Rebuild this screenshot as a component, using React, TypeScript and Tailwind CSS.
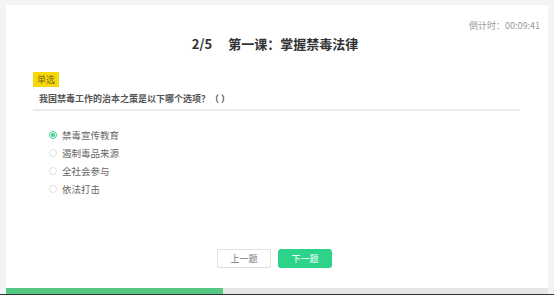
import React, { useState } from 'react';

const options = ['禁毒宣传教育', '遏制毒品来源', '全社会参与', '依法打击'];

export default function App() {
  const [selected, setSelected] = useState(0);

  return (
    <div
      className="w-[554px] h-[295px] bg-[#f3f4f5] flex flex-col overflow-hidden"
      style={{ fontFamily: '"Noto Sans CJK SC", "Noto Sans", sans-serif' }}
    >
      <div className="flex-1 flex flex-col pt-[5px] px-[6px]">
        <div className="flex-1 bg-white flex flex-col">
          {/* timer */}
          <div className="flex justify-end pr-[8px] pt-[15px] h-[28px]">
            <span className="text-[9px] leading-[12px] text-[#999]">倒计时：00:09:41</span>
          </div>

          {/* title */}
          <h1 className="text-center text-[13px] leading-[18px] font-bold text-[#333] mt-[2px] pr-[4px]">
            2/5<span className="inline-block w-[16px]" />第一课：掌握禁毒法律
          </h1>

          {/* question */}
          <div className="mt-[11px] ml-[27px] mr-[28px]">
            <span className="inline-block bg-[#f7d80b] text-[#7a6a12] text-[9px] leading-[15px] px-[4px]">
              单选
            </span>
            <p className="text-[9px] leading-[14px] font-bold text-[#555] mt-[4px] pl-[6px]">
              我国禁毒工作的治本之策是以下哪个选项？（ ）
            </p>
            <div className="h-[2px] bg-[#ececec] mt-[3px]" />
          </div>

          {/* options */}
          <div className="mt-[15px] ml-[43px] flex flex-col">
            {options.map((opt, i) => (
              <label
                key={opt}
                className="flex items-center gap-[5px] h-[18px] cursor-pointer"
                onClick={() => setSelected(i)}
              >
                <span
                  className={`w-[8px] h-[8px] rounded-full border flex items-center justify-center ${
                    selected === i ? 'border-[#3ccf8e]' : 'border-[#e2e2e2]'
                  }`}
                >
                  {selected === i && <span className="w-[4px] h-[4px] rounded-full bg-[#3ccf8e]" />}
                </span>
                <span className="text-[9.5px] leading-[12px] text-[#666]">{opt}</span>
              </label>
            ))}
          </div>

          {/* buttons */}
          <div className="mt-auto mb-[20px] flex justify-center gap-[7px] pr-[5px]">
            <button className="w-[54px] h-[19px] border border-[#e0e0e0] rounded-[2px] bg-white text-[9px] text-[#777]">
              上一题
            </button>
            <button className="w-[54px] h-[19px] rounded-[3px] bg-[#2ed38a] text-[9px] text-white">
              下一题
            </button>
          </div>

          {/* progress */}
          <div className="h-[6px] bg-[#e6e6e6] flex">
            <div className="w-[40%] bg-[#55c881]" />
          </div>
        </div>
      </div>
      <div className="h-[1px] bg-[#333]" />
    </div>
  );
}
